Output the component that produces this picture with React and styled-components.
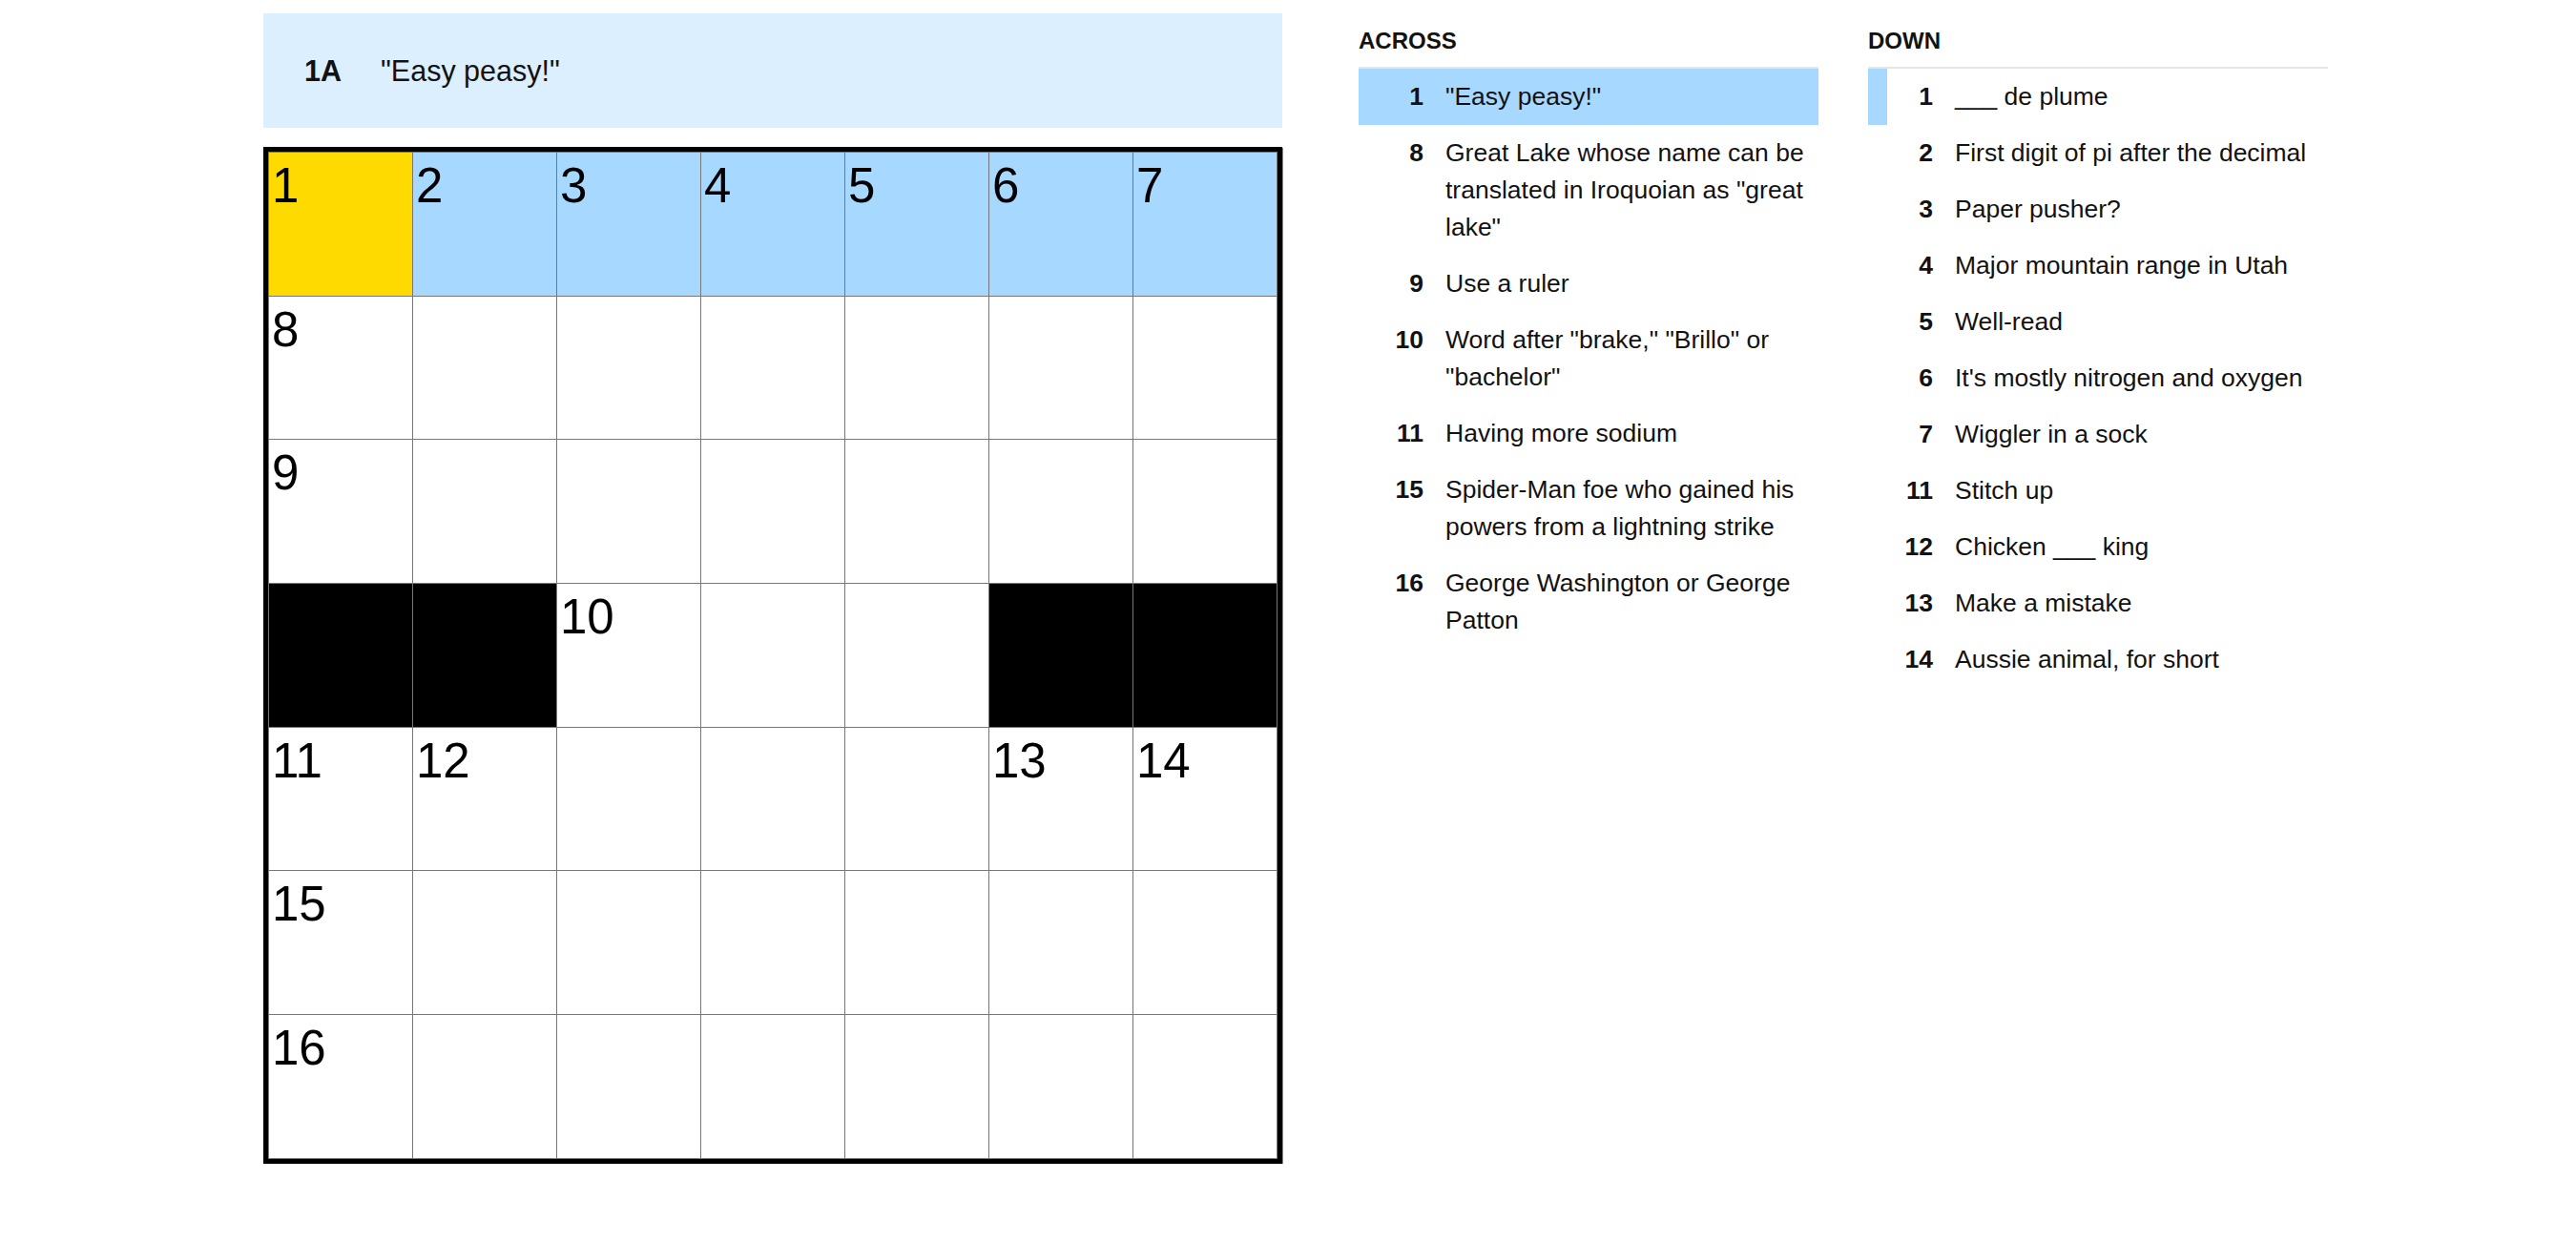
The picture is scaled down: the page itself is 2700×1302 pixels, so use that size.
import React from 'react';
import styled, { createGlobalStyle } from 'styled-components';

const GlobalStyle = createGlobalStyle`
  html, body {
    margin: 0;
    padding: 0;
    background: #fff;
  }
  body {
    font-family: "Liberation Sans", Arial, sans-serif;
    color: #121212;
  }
`;

const BLUE = '#a7d8ff';

// 7x7 board: '#' is a black square, a number is a clue start, '' is plain
const board = [
  ['1', '2', '3', '4', '5', '6', '7'],
  ['8', '', '', '', '', '', ''],
  ['9', '', '', '', '', '', ''],
  ['#', '#', '10', '', '', '#', '#'],
  ['11', '12', '', '', '', '13', '14'],
  ['15', '', '', '', '', '', ''],
  ['16', '', '', '', '', '', ''],
];

const across = [
  ['1', '"Easy peasy!"'],
  ['8', 'Great Lake whose name can be translated in Iroquoian as "great lake"'],
  ['9', 'Use a ruler'],
  ['10', 'Word after "brake," "Brillo" or "bachelor"'],
  ['11', 'Having more sodium'],
  ['15', 'Spider-Man foe who gained his powers from a lightning strike'],
  ['16', 'George Washington or George Patton'],
];

const down = [
  ['1', '___ de plume'],
  ['2', 'First digit of pi after the decimal'],
  ['3', 'Paper pusher?'],
  ['4', 'Major mountain range in Utah'],
  ['5', 'Well-read'],
  ['6', "It's mostly nitrogen and oxygen"],
  ['7', 'Wiggler in a sock'],
  ['11', 'Stitch up'],
  ['12', 'Chicken ___ king'],
  ['13', 'Make a mistake'],
  ['14', 'Aussie animal, for short'],
];

const Page = styled.div`
  display: flex;
  align-items: flex-start;
  padding: 14px 0 0 276px;
`;

const BoardColumn = styled.div`
  display: flex;
  flex-direction: column;
  gap: 20px;
  width: 1068px;
`;

const ClueBar = styled.div`
  display: flex;
  align-items: center;
  height: 120px;
  padding-left: 43px;
  background: #dcefff;
  font-size: 30.5px;
`;

const ClueBarLabel = styled.span`
  font-weight: 700;
  margin-right: 41px;
`;

const Board = styled.div`
  display: grid;
  grid-template-columns: repeat(7, 150px);
  grid-auto-rows: 149.7px;
  gap: 1px;
  padding: 1px;
  border: 5px solid #000;
  background: #777;
  box-shadow: 1px 1px 0 #8a8a8a;
`;

const cellColors = {
  selected: '#ffda00',
  word: BLUE,
  block: '#000',
  open: '#fff',
};

const Cell = styled.div`
  background: ${(p) => cellColors[p.$state]};
  padding: 9px 0 0 3px;
  font-size: 51px;
  line-height: 1;
  color: #000;
`;

const ClueColumn = styled.section`
  width: 482px;
  margin-left: ${(p) => p.$offset}px;
  padding-top: 14px;
`;

const ListTitle = styled.h3`
  margin: 0 0 12px;
  font-size: 24px;
  line-height: 30px;
  font-weight: 700;
  text-transform: uppercase;
`;

const ClueList = styled.ol`
  list-style: none;
  margin: 0;
  padding: 0;
  border-top: 2px solid #e6e6e6;
`;

const ClueRow = styled.li`
  display: flex;
  align-items: flex-start;
  padding: 10px 0;
  font-size: 26.5px;
  line-height: 39px;
  background: ${(p) => (p.$tone === 'active' ? BLUE : 'transparent')};
  box-shadow: ${(p) => (p.$tone === 'cross' ? `inset 20px 0 0 ${BLUE}` : 'none')};
`;

const ClueNum = styled.span`
  flex: 0 0 68px;
  text-align: right;
  font-weight: 700;
  margin-right: 23px;
`;

const ClueText = styled.span`
  flex: 1;
`;

function cellState(r, c, v) {
  if (v === '#') return 'block';
  if (r === 0 && c === 0) return 'selected';
  if (r === 0) return 'word';
  return 'open';
}

function Clues({ title, items, tone, offset }) {
  return (
    <ClueColumn $offset={offset}>
      <ListTitle>{title}</ListTitle>
      <ClueList>
        {items.map(([n, text], i) => (
          <ClueRow key={n} $tone={i === 0 ? tone : undefined}>
            <ClueNum>{n}</ClueNum>
            <ClueText>{text}</ClueText>
          </ClueRow>
        ))}
      </ClueList>
    </ClueColumn>
  );
}

export default function App() {
  return (
    <>
      <GlobalStyle />
      <Page>
        <BoardColumn>
          <ClueBar>
            <ClueBarLabel>1A</ClueBarLabel>
            <span>"Easy peasy!"</span>
          </ClueBar>
          <Board>
            {board.map((row, r) =>
              row.map((v, c) => (
                <Cell key={`${r}-${c}`} $state={cellState(r, c, v)}>
                  {v !== '#' ? v : null}
                </Cell>
              ))
            )}
          </Board>
        </BoardColumn>
        <Clues title="Across" items={across} tone="active" offset={80} />
        <Clues title="Down" items={down} tone="cross" offset={52} />
      </Page>
    </>
  );
}
